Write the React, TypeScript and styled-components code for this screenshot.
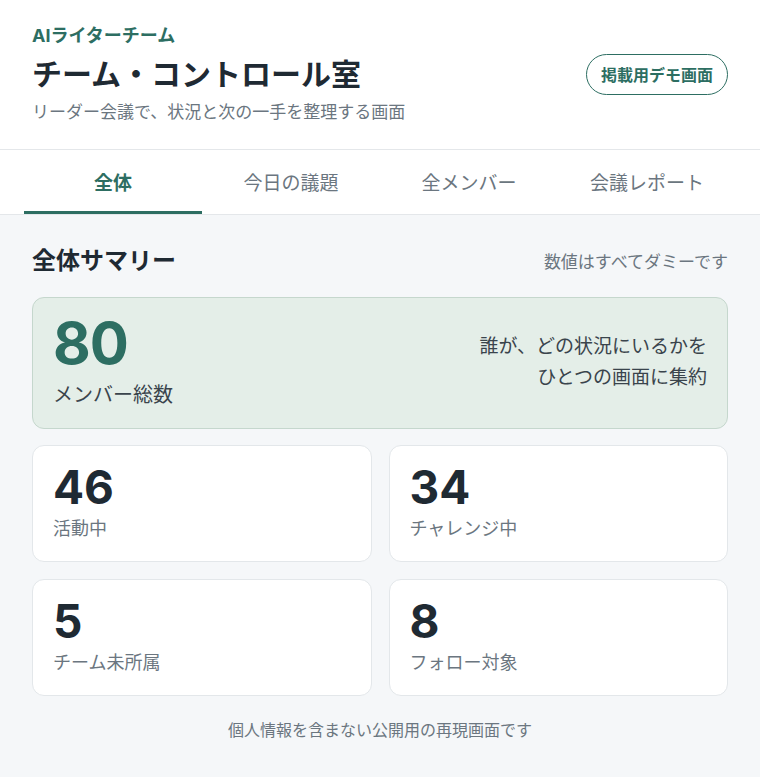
import styled, { createGlobalStyle } from "styled-components";

const green = "#2d6e62";
const ink = "#1f2a33";
const muted = "#6b7680";

const GlobalStyle = createGlobalStyle`
  html, body {
    margin: 0;
    padding: 0;
    background: #f5f7f9;
    font-family: "Inter", "Noto Sans CJK JP", sans-serif;
    color: ${ink};
  }
  * { box-sizing: border-box; }
`;

const tabs = ["全体", "今日の議題", "全メンバー", "会議レポート"];

const stats = [
  { value: 46, label: "活動中" },
  { value: 34, label: "チャレンジ中" },
  { value: 5, label: "チーム未所属" },
  { value: 8, label: "フォロー対象" },
];

function App() {
  return (
    <Page>
      <GlobalStyle />
      <Header>
        <HeaderText>
          <TeamName>AIライターチーム</TeamName>
          <Title>チーム・コントロール室</Title>
          <Subtitle>リーダー会議で、状況と次の一手を整理する画面</Subtitle>
        </HeaderText>
        <DemoBadge>掲載用デモ画面</DemoBadge>
      </Header>
      <TabBar>
        {tabs.map((t, i) => (
          <Tab key={t} $active={i === 0}>
            {t}
          </Tab>
        ))}
      </TabBar>
      <Main>
        <SectionHead>
          <SectionTitle>全体サマリー</SectionTitle>
          <SectionNote>数値はすべてダミーです</SectionNote>
        </SectionHead>
        <HeroCard>
          <div>
            <HeroValue>80</HeroValue>
            <HeroLabel>メンバー総数</HeroLabel>
          </div>
          <HeroNote>
            誰が、どの状況にいるかを
            <br />
            ひとつの画面に集約
          </HeroNote>
        </HeroCard>
        <StatGrid>
          {stats.map((s) => (
            <StatCard key={s.label}>
              <StatValue>{s.value}</StatValue>
              <StatLabel>{s.label}</StatLabel>
            </StatCard>
          ))}
        </StatGrid>
        <Footer>個人情報を含まない公開用の再現画面です</Footer>
      </Main>
    </Page>
  );
}

const Page = styled.div`
  min-height: 777px;
  background: #f5f7f9;
`;

const Header = styled.header`
  background: #fff;
  display: flex;
  align-items: center;
  justify-content: space-between;
  padding: 24px 32px 25px;
  border-bottom: 1px solid #e4e7ea;
  height: 150px;
`;

const HeaderText = styled.div`
  display: flex;
  flex-direction: column;
`;

const TeamName = styled.div`
  font-size: 18px;
  font-weight: 700;
  color: ${green};
  line-height: 24px;
`;

const Title = styled.h1`
  margin: 6px 0 0;
  font-size: 30px;
  font-weight: 700;
  line-height: 40px;
  color: ${ink};
`;

const Subtitle = styled.div`
  margin-top: 6px;
  font-size: 17px;
  color: ${muted};
  line-height: 24px;
`;

const DemoBadge = styled.div`
  border: 1.5px solid ${green};
  border-radius: 999px;
  color: ${green};
  font-size: 16px;
  font-weight: 700;
  height: 41px;
  padding: 0 14px;
  display: flex;
  align-items: center;
`;

const TabBar = styled.nav`
  background: #fff;
  display: grid;
  grid-template-columns: repeat(4, 1fr);
  padding: 0 24px;
  border-bottom: 1px solid #e4e7ea;
`;

const Tab = styled.div<{ $active: boolean }>`
  height: 64px;
  display: flex;
  align-items: center;
  justify-content: center;
  font-size: 19px;
  font-weight: ${(p) => (p.$active ? 700 : 400)};
  color: ${(p) => (p.$active ? green : muted)};
  border-bottom: 3px solid ${(p) => (p.$active ? green : "transparent")};
  padding-top: 1px;
`;

const Main = styled.main`
  padding: 26px 32px 0;
  display: flex;
  flex-direction: column;
`;

const SectionHead = styled.div`
  display: flex;
  justify-content: space-between;
  align-items: center;
  height: 34px;
  margin-bottom: 22px;
`;

const SectionTitle = styled.h2`
  margin: 0;
  font-size: 24px;
  font-weight: 700;
  color: ${ink};
`;

const SectionNote = styled.span`
  font-size: 17px;
  color: ${muted};
  padding-top: 4px;
`;

const HeroCard = styled.section`
  background: #e4eee8;
  border: 1px solid #c5d7cd;
  border-radius: 12px;
  height: 132px;
  padding: 13px 20px 0;
  display: flex;
  justify-content: space-between;
  align-items: flex-start;
`;

const HeroValue = styled.div`
  font-size: 58px;
  font-weight: 700;
  line-height: 64px;
  color: ${green};
  letter-spacing: -1px;
`;

const HeroLabel = styled.div`
  font-size: 20px;
  line-height: 28px;
  margin-top: 6px;
  color: #3a444c;
`;

const HeroNote = styled.div`
  text-align: right;
  font-size: 19px;
  line-height: 31px;
  color: #3a444c;
  margin-top: 20px;
`;

const StatGrid = styled.div`
  margin-top: 16px;
  display: grid;
  grid-template-columns: 1fr 1fr;
  gap: 17px;
`;

const StatCard = styled.div`
  background: #fff;
  border: 1px solid #e3e7ea;
  border-radius: 12px;
  height: 117px;
  padding: 14px 20px 0;
`;

const StatValue = styled.div`
  font-size: 46px;
  font-weight: 700;
  line-height: 54px;
  color: ${ink};
`;

const StatLabel = styled.div`
  font-size: 18px;
  line-height: 24px;
  margin-top: 3px;
  color: ${muted};
`;

const Footer = styled.div`
  text-align: center;
  font-size: 16px;
  color: ${muted};
  margin-top: 21px;
`;

export default App;
